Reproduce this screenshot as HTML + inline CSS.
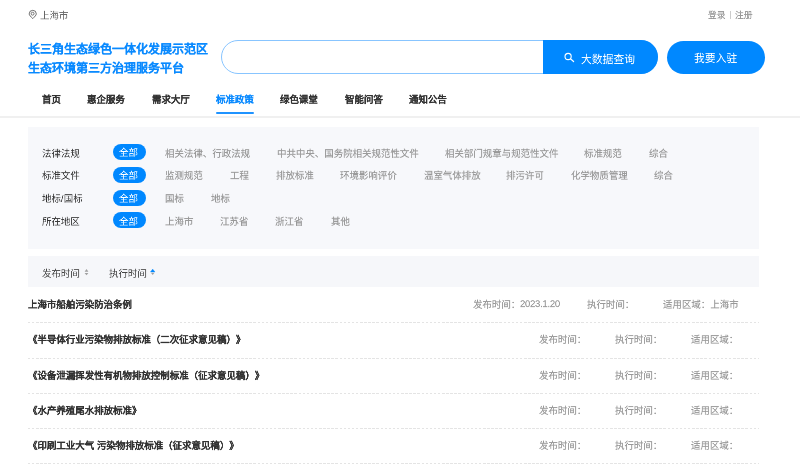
<!DOCTYPE html>
<html lang="zh-CN"><head><meta charset="utf-8">
<style>
*{margin:0;padding:0;box-sizing:border-box}
html,body{width:800px;height:468px;overflow:hidden;background:#fff}
body{font-family:"Liberation Sans",sans-serif;color:#333;position:relative}
.a{position:absolute}
.t{position:absolute;white-space:nowrap;transform-origin:0 0;line-height:1.2;text-spacing-trim:space-all;will-change:transform}
.search{left:220.5px;top:40px;width:437px;height:34.4px;border:1.2px solid #88c5ff;border-radius:17.2px;overflow:hidden}
.sbtn{position:absolute;left:542.75px;top:40px;width:114.75px;height:34.4px;background:#0088ff;border-radius:0 17.2px 17.2px 0}
.join{left:667.2px;top:40.5px;width:97.8px;height:33.7px;border-radius:16.85px;background:#0088ff}
.navline{left:0;top:116px;width:800px;height:1.5px;background:#f0f0f0}
.ul{left:216px;top:112.3px;width:37.5px;height:1.9px;border-radius:1px;background:#1f93ff}
.panel{left:27.6px;top:127.3px;width:731.6px;height:121.8px;background:#f7f8fb}
.tag{left:112.9px;width:32.7px;height:15.9px;border-radius:8px;background:#0088ff}
.sortbar{left:28px;top:255.7px;width:731.2px;height:31.8px;background:#f6f7fa}
.dash{left:27.9px;width:731.6px;height:1px;background:repeating-linear-gradient(90deg,#e4e4e4 0 2.4px,transparent 2.4px 4.1px)}
.sep{left:730px;top:10.5px;width:0.8px;height:8px;background:#ccc}
</style></head><body>
<svg class="a" style="left:27px;top:8px" width="12" height="12" viewBox="0 0 12 12"><path d="M5.75 10.6C3.7 8.6 2.2 7.1 2.2 5.9A3.55 3.55 0 0 1 9.3 5.9C9.3 7.1 7.8 8.6 5.75 10.6Z" fill="none" stroke="#666" stroke-width="0.95" stroke-linejoin="round"/><circle cx="5.6" cy="5.7" r="1.45" fill="none" stroke="#666" stroke-width="0.9"/></svg>
<div class="a sep"></div>
<div class="a search"></div>
<div class="a sbtn"></div>
<svg class="a" style="left:562px;top:50px" width="14" height="14" viewBox="0 0 14 14"><circle cx="6.1" cy="6.5" r="3.1" fill="none" stroke="#fff" stroke-width="1.1"/><path d="M8.4 8.8L11.6 11.5" stroke="#fff" stroke-width="1.2" stroke-linecap="round"/></svg>
<div class="a join"></div>
<div class="a ul"></div>
<div class="a navline"></div>
<div class="a panel"></div>
<div class="a tag" style="top:144.1px"></div>
<div class="a tag" style="top:166.9px"></div>
<div class="a tag" style="top:190px"></div>
<div class="a tag" style="top:212.3px"></div>
<div class="a sortbar"></div>
<svg class="a" style="left:83px;top:268px" width="7" height="9" viewBox="0 0 7 9"><path d="M3.5 1.1L5.4 3.7H1.6Z" fill="#a0a0a0"/><path d="M3.5 7.3L5.4 4.9H1.6Z" fill="#a0a0a0"/></svg>
<svg class="a" style="left:149.2px;top:268px" width="7" height="9" viewBox="0 0 7 9"><path d="M3.7 1.1L6 4H1.4Z" fill="#0088ff" stroke="#0088ff" stroke-width="0.3" stroke-linejoin="round"/><path d="M3.7 7.1L5.5 4.7H1.9Z" fill="#a0a0a0"/></svg>
<div class="a dash" style="top:322.2px"></div>
<div class="a dash" style="top:357.5px"></div>
<div class="a dash" style="top:392.8px"></div>
<div class="a dash" style="top:428.1px"></div>
<div class="a dash" style="top:463.4px"></div>
<div class="t" id="loc" style="left:39.93px;top:10.08px;font-size:20px;transform:scale(0.47250);font-weight:normal;color:#666;">上海市</div>
<div class="t" id="login" style="left:707.90px;top:9.62px;font-size:20px;transform:scale(0.44000);font-weight:normal;color:#999;-webkit-text-stroke:0.35px #999;">登录</div>
<div class="t" id="reg" style="left:735.40px;top:9.62px;font-size:20px;transform:scale(0.44000);font-weight:normal;color:#999;-webkit-text-stroke:0.35px #999;">注册</div>
<div class="t" id="title1" style="left:28.05px;top:41.89px;font-size:20px;transform:scale(0.60000);font-weight:bold;color:#0a8aff;-webkit-text-stroke:0.4px #0a8aff;">长三角生态绿色一体化发展示范区</div>
<div class="t" id="title2" style="left:28.05px;top:60.89px;font-size:20px;transform:scale(0.60000);font-weight:bold;color:#0a8aff;-webkit-text-stroke:0.4px #0a8aff;">生态环境第三方治理服务平台</div>
<div class="t" id="sbtxt" style="left:581.08px;top:52.58px;font-size:20px;transform:scale(0.54000);font-weight:normal;color:#fff;">大数据查询</div>
<div class="t" id="join" style="left:694.28px;top:51.68px;font-size:20px;transform:scale(0.54000);font-weight:normal;color:#fff;">我要入驻</div>
<div class="t" id="nav0" style="left:41.55px;top:93.59px;font-size:20px;transform:scale(0.47250);font-weight:bold;color:#333;-webkit-text-stroke:0.4px #333;">首页</div>
<div class="t" id="nav1" style="left:86.55px;top:93.59px;font-size:20px;transform:scale(0.47250);font-weight:bold;color:#333;-webkit-text-stroke:0.4px #333;">惠企服务</div>
<div class="t" id="nav2" style="left:151.55px;top:93.59px;font-size:20px;transform:scale(0.47250);font-weight:bold;color:#333;-webkit-text-stroke:0.4px #333;">需求大厅</div>
<div class="t" id="nav3" style="left:215.65px;top:93.59px;font-size:20px;transform:scale(0.47250);font-weight:bold;color:#0a8aff;-webkit-text-stroke:0.4px #0a8aff;">标准政策</div>
<div class="t" id="nav4" style="left:280.25px;top:93.59px;font-size:20px;transform:scale(0.47250);font-weight:bold;color:#333;-webkit-text-stroke:0.4px #333;">绿色课堂</div>
<div class="t" id="nav5" style="left:345.05px;top:93.59px;font-size:20px;transform:scale(0.47250);font-weight:bold;color:#333;-webkit-text-stroke:0.4px #333;">智能问答</div>
<div class="t" id="nav6" style="left:409.35px;top:93.59px;font-size:20px;transform:scale(0.47250);font-weight:bold;color:#333;-webkit-text-stroke:0.4px #333;">通知公告</div>
<div class="t" id="lab0" style="left:42.23px;top:147.58px;font-size:20px;transform:scale(0.47250);font-weight:normal;color:#333;">法律法规</div>
<div class="t" id="lab1" style="left:42.23px;top:170.28px;font-size:20px;transform:scale(0.47250);font-weight:normal;color:#333;">标准文件</div>
<div class="t" id="lab2" style="left:42.23px;top:193.28px;font-size:20px;transform:scale(0.47250);font-weight:normal;color:#333;">地标/国标</div>
<div class="t" id="lab3" style="left:42.23px;top:216.38px;font-size:20px;transform:scale(0.47250);font-weight:normal;color:#333;">所在地区</div>
<div class="t" id="tagt0" style="left:119.33px;top:147.48px;font-size:20px;transform:scale(0.47250);font-weight:normal;color:#fff;">全部</div>
<div class="t" id="tagt1" style="left:119.33px;top:170.28px;font-size:20px;transform:scale(0.47250);font-weight:normal;color:#fff;">全部</div>
<div class="t" id="tagt2" style="left:119.33px;top:193.38px;font-size:20px;transform:scale(0.47250);font-weight:normal;color:#fff;">全部</div>
<div class="t" id="tagt3" style="left:119.33px;top:215.68px;font-size:20px;transform:scale(0.47250);font-weight:normal;color:#fff;">全部</div>
<div class="t" id="it0_0" style="left:164.93px;top:147.58px;font-size:20px;transform:scale(0.47250);font-weight:normal;color:#999;-webkit-text-stroke:0.35px #999;">相关法律、行政法规</div>
<div class="t" id="it0_1" style="left:277.13px;top:147.58px;font-size:20px;transform:scale(0.47250);font-weight:normal;color:#999;-webkit-text-stroke:0.35px #999;">中共中央、国务院相关规范性文件</div>
<div class="t" id="it0_2" style="left:444.58px;top:147.58px;font-size:20px;transform:scale(0.47250);font-weight:normal;color:#999;-webkit-text-stroke:0.35px #999;">相关部门规章与规范性文件</div>
<div class="t" id="it0_3" style="left:584.33px;top:147.58px;font-size:20px;transform:scale(0.47250);font-weight:normal;color:#999;-webkit-text-stroke:0.35px #999;">标准规范</div>
<div class="t" id="it0_4" style="left:649.03px;top:147.58px;font-size:20px;transform:scale(0.47250);font-weight:normal;color:#999;-webkit-text-stroke:0.35px #999;">综合</div>
<div class="t" id="it1_0" style="left:164.83px;top:170.28px;font-size:20px;transform:scale(0.47250);font-weight:normal;color:#999;-webkit-text-stroke:0.35px #999;">监测规范</div>
<div class="t" id="it1_1" style="left:229.83px;top:170.28px;font-size:20px;transform:scale(0.47250);font-weight:normal;color:#999;-webkit-text-stroke:0.35px #999;">工程</div>
<div class="t" id="it1_2" style="left:275.58px;top:170.28px;font-size:20px;transform:scale(0.47250);font-weight:normal;color:#999;-webkit-text-stroke:0.35px #999;">排放标准</div>
<div class="t" id="it1_3" style="left:339.83px;top:170.28px;font-size:20px;transform:scale(0.47250);font-weight:normal;color:#999;-webkit-text-stroke:0.35px #999;">环境影响评价</div>
<div class="t" id="it1_4" style="left:423.58px;top:170.28px;font-size:20px;transform:scale(0.47250);font-weight:normal;color:#999;-webkit-text-stroke:0.35px #999;">温室气体排放</div>
<div class="t" id="it1_5" style="left:506.33px;top:170.28px;font-size:20px;transform:scale(0.47250);font-weight:normal;color:#999;-webkit-text-stroke:0.35px #999;">排污许可</div>
<div class="t" id="it1_6" style="left:571.33px;top:170.28px;font-size:20px;transform:scale(0.47250);font-weight:normal;color:#999;-webkit-text-stroke:0.35px #999;">化学物质管理</div>
<div class="t" id="it1_7" style="left:654.33px;top:170.28px;font-size:20px;transform:scale(0.47250);font-weight:normal;color:#999;-webkit-text-stroke:0.35px #999;">综合</div>
<div class="t" id="it2_0" style="left:164.83px;top:193.28px;font-size:20px;transform:scale(0.47250);font-weight:normal;color:#999;-webkit-text-stroke:0.35px #999;">国标</div>
<div class="t" id="it2_1" style="left:211.08px;top:193.28px;font-size:20px;transform:scale(0.47250);font-weight:normal;color:#999;-webkit-text-stroke:0.35px #999;">地标</div>
<div class="t" id="it3_0" style="left:164.83px;top:216.38px;font-size:20px;transform:scale(0.47250);font-weight:normal;color:#999;-webkit-text-stroke:0.35px #999;">上海市</div>
<div class="t" id="it3_1" style="left:220.08px;top:216.38px;font-size:20px;transform:scale(0.47250);font-weight:normal;color:#999;-webkit-text-stroke:0.35px #999;">江苏省</div>
<div class="t" id="it3_2" style="left:275.08px;top:216.38px;font-size:20px;transform:scale(0.47250);font-weight:normal;color:#999;-webkit-text-stroke:0.35px #999;">浙江省</div>
<div class="t" id="it3_3" style="left:330.58px;top:216.38px;font-size:20px;transform:scale(0.47250);font-weight:normal;color:#999;-webkit-text-stroke:0.35px #999;">其他</div>
<div class="t" id="sort1" style="left:42.08px;top:267.68px;font-size:20px;transform:scale(0.47250);font-weight:normal;color:#444;">发布时间</div>
<div class="t" id="sort2" style="left:108.53px;top:267.68px;font-size:20px;transform:scale(0.47250);font-weight:normal;color:#444;">执行时间</div>
<div class="t" id="rt0" style="left:27.75px;top:298.94px;font-size:20px;transform:scale(0.47250);font-weight:bold;color:#333;-webkit-text-stroke:0.4px #333;">上海市船舶污染防治条例</div>
<div class="t" id="rt1" style="left:27.83px;top:334.24px;font-size:20px;transform:scale(0.47250);font-weight:bold;color:#333;-webkit-text-stroke:0.4px #333;">《半导体行业污染物排放标准（二次征求意见稿）》</div>
<div class="t" id="rt2" style="left:27.83px;top:369.54px;font-size:20px;transform:scale(0.47250);font-weight:bold;color:#333;-webkit-text-stroke:0.4px #333;">《设备泄漏挥发性有机物排放控制标准（征求意见稿）》</div>
<div class="t" id="rt3" style="left:27.83px;top:404.84px;font-size:20px;transform:scale(0.47250);font-weight:bold;color:#333;-webkit-text-stroke:0.4px #333;">《水产养殖尾水排放标准》</div>
<div class="t" id="rt4" style="left:27.83px;top:440.14px;font-size:20px;transform:scale(0.47250);font-weight:bold;color:#333;-webkit-text-stroke:0.4px #333;">《印刷工业大气 污染物排放标准（征求意见稿）》</div>
<div class="t" id="m0a" style="left:472.83px;top:299.08px;font-size:20px;transform:scale(0.47250);font-weight:normal;color:#999;-webkit-text-stroke:0.35px #999;">发布时间：</div>
<div class="t" id="m0d" style="left:520.23px;top:298.08px;font-size:20px;transform:scale(0.47250);font-weight:normal;color:#999;letter-spacing:-0.5px;-webkit-text-stroke:0.35px #999;">2023.1.20</div>
<div class="t" id="m0b" style="left:586.53px;top:299.08px;font-size:20px;transform:scale(0.47250);font-weight:normal;color:#999;-webkit-text-stroke:0.35px #999;">执行时间：</div>
<div class="t" id="m0c" style="left:663.13px;top:299.08px;font-size:20px;transform:scale(0.47250);font-weight:normal;color:#999;-webkit-text-stroke:0.35px #999;">适用区域：上海市</div>
<div class="t" id="m1a" style="left:538.63px;top:334.38px;font-size:20px;transform:scale(0.47250);font-weight:normal;color:#999;-webkit-text-stroke:0.35px #999;">发布时间：</div>
<div class="t" id="m1b" style="left:614.83px;top:334.38px;font-size:20px;transform:scale(0.47250);font-weight:normal;color:#999;-webkit-text-stroke:0.35px #999;">执行时间：</div>
<div class="t" id="m1c" style="left:691.03px;top:334.38px;font-size:20px;transform:scale(0.47250);font-weight:normal;color:#999;-webkit-text-stroke:0.35px #999;">适用区域：</div>
<div class="t" id="m2a" style="left:538.63px;top:369.68px;font-size:20px;transform:scale(0.47250);font-weight:normal;color:#999;-webkit-text-stroke:0.35px #999;">发布时间：</div>
<div class="t" id="m2b" style="left:614.83px;top:369.68px;font-size:20px;transform:scale(0.47250);font-weight:normal;color:#999;-webkit-text-stroke:0.35px #999;">执行时间：</div>
<div class="t" id="m2c" style="left:691.03px;top:369.68px;font-size:20px;transform:scale(0.47250);font-weight:normal;color:#999;-webkit-text-stroke:0.35px #999;">适用区域：</div>
<div class="t" id="m3a" style="left:538.63px;top:404.98px;font-size:20px;transform:scale(0.47250);font-weight:normal;color:#999;-webkit-text-stroke:0.35px #999;">发布时间：</div>
<div class="t" id="m3b" style="left:614.83px;top:404.98px;font-size:20px;transform:scale(0.47250);font-weight:normal;color:#999;-webkit-text-stroke:0.35px #999;">执行时间：</div>
<div class="t" id="m3c" style="left:691.03px;top:404.98px;font-size:20px;transform:scale(0.47250);font-weight:normal;color:#999;-webkit-text-stroke:0.35px #999;">适用区域：</div>
<div class="t" id="m4a" style="left:538.63px;top:440.28px;font-size:20px;transform:scale(0.47250);font-weight:normal;color:#999;-webkit-text-stroke:0.35px #999;">发布时间：</div>
<div class="t" id="m4b" style="left:614.83px;top:440.28px;font-size:20px;transform:scale(0.47250);font-weight:normal;color:#999;-webkit-text-stroke:0.35px #999;">执行时间：</div>
<div class="t" id="m4c" style="left:691.03px;top:440.28px;font-size:20px;transform:scale(0.47250);font-weight:normal;color:#999;-webkit-text-stroke:0.35px #999;">适用区域：</div>
</body></html>
